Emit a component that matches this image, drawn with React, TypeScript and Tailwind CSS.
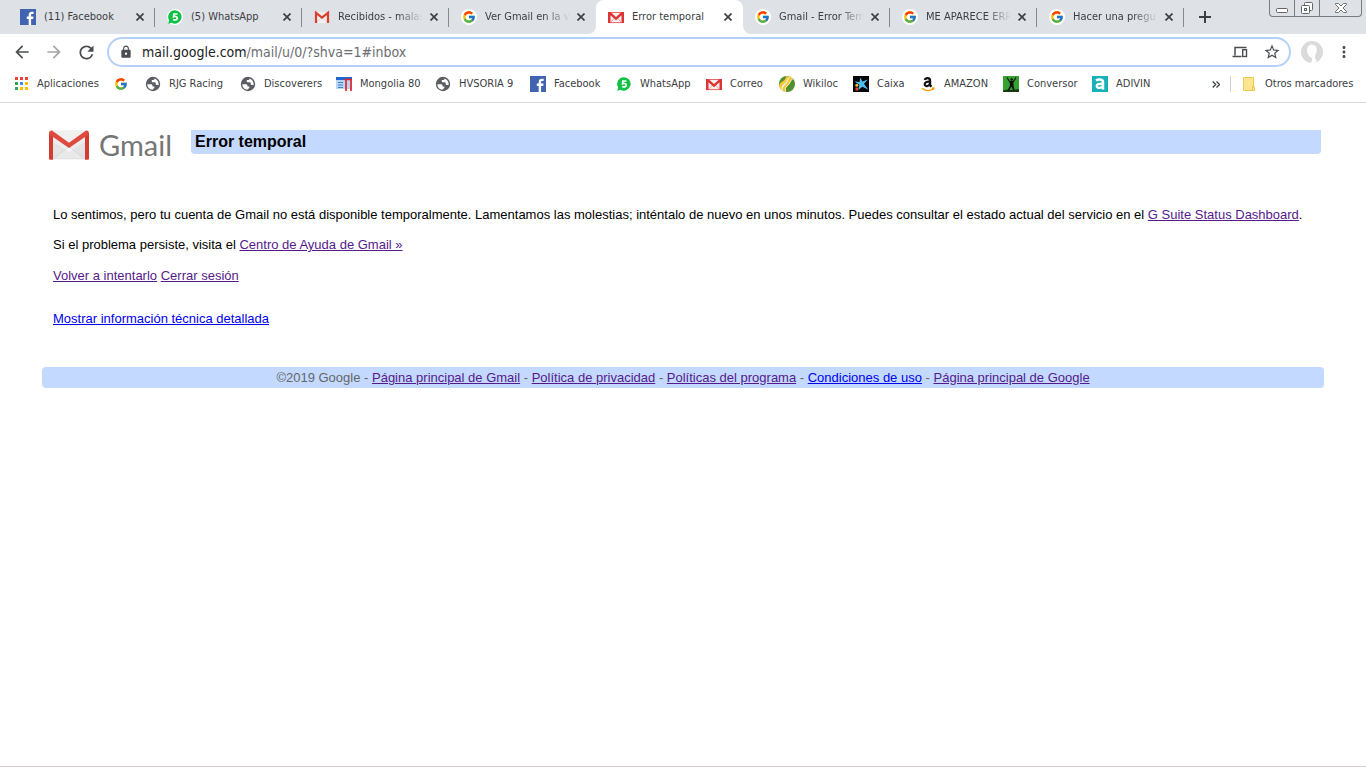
import type { ReactNode } from 'react';
import { MdArrowBack, MdArrowForward, MdRefresh, MdLock, MdStarBorder, MdMoreVert } from 'react-icons/md';
import { FcGoogle } from 'react-icons/fc';

const icon = 'block h-4 w-4 shrink-0';

function FacebookIcon() {
  return (
    <svg className={icon} viewBox="0 0 16 16">
      <rect width="16" height="16" fill="#4064b0" />
      <path d="M8.700 16V9.900H6.800V7.500h1.900V5.700C8.700 3.700 9.800 2.700 11.700 2.700l1.900.1V5h-1.300c-1 0-1.200.5-1.200 1.200v1.300h2.400l-.3 2.400h-2.100V16z" fill="#fff" />
    </svg>
  );
}

function WhatsAppIcon() {
  return (
    <svg className={icon} viewBox="0 0 16 16">
      <circle cx="8" cy="8" r="8" fill="#fff" />
      <path d="M8 1.200a6.700 6.700 0 1 1-3.300 12.600L1.200 14.700l1-3.300A6.700 6.700 0 0 1 8 1.200z" fill="#0cc143" />
      <path d="M10.500 5H6.800l-.2 2.700c.8-.5 3.700-.6 3.700 1.400 0 2-2.500 2.200-4.100 1.300" fill="none" stroke="#fff" strokeWidth="1.700" />
    </svg>
  );
}

function GmailIcon() {
  return (
    <svg className={icon} viewBox="0 0 16 16">
      <path d="M1 3h14v11H1z" fill="#f1efee" />
      <path d="M2 13.500l6-5 6 5" fill="none" stroke="#dcd8d6" />
      <path d="M2 14V3.800L8 8.500l6-4.700V14" fill="none" stroke="#d9402f" strokeWidth="2.200" />
    </svg>
  );
}

function GmailRedIcon() {
  return (
    <svg className={icon} viewBox="0 0 16 16">
      <path d="M0 3h16v11H0z" fill="#fbeeee" />
      <path d="M2 14l4.500-5M14 14L9.500 9" stroke="#eda3a3" strokeWidth=".9" />
      <path d="M0 3.500h16M0 13.600h16" stroke="#e05a5a" strokeWidth=".9" />
      <path d="M0 3h2.500L8 8l5.500-5H16v11h-2.500V6.300L8 11.200 2.500 6.300V14H0z" fill="#dd3535" />
    </svg>
  );
}

function GoogleIcon() {
  return (
    <span className="flex h-4 w-4 shrink-0 items-center justify-center rounded-full bg-white">
      <FcGoogle className="h-[14px] w-[14px]" />
    </span>
  );
}

function GlobeIcon() {
  return (
    <svg className={icon} viewBox="0 0 16 16">
      <circle cx="8" cy="8" r="7.200" fill="#5b5f64" />
      <path d="M2.300 8.200h3.400c1.300 0 1.800.6 1.800 1.500v.8h1.300c.8 0 .9.700.5 1.200l-1.500 1.900c-3.300.1-5.500-2.500-5.500-5.400z" fill="#fff" />
      <path d="M9.300 2.400c.3 1-.2 1.600-1.300 1.600H6.800v1.500c0 .5.300.8.800.8h2.200c.6 0 .9.400.9 1v.7c0 .6.400.9 1 .9h1.900C14 6 12.300 3.200 9.300 2.400z" fill="#fff" />
    </svg>
  );
}

function AppsIcon() {
  const colors = ['#ea4335', '#ea4335', '#ea4335', '#34a853', '#4285f4', '#fbbc05', '#34a853', '#fbbc05', '#fbbc05'];
  return (
    <svg className={icon} viewBox="0 0 16 16">
      {colors.map((c, i) => (
        <rect key={i} x={2 + (i % 3) * 5} y={1 + Math.floor(i / 3) * 5} width="3" height="3" fill={c} />
      ))}
    </svg>
  );
}

function MongoliaIcon() {
  return (
    <svg className={icon} viewBox="0 0 16 16">
      <path d="M0 1h16v12H0z" fill="#b9d5f3" />
      <path d="M0 1h16v3H0z" fill="#1f66cf" />
      <path d="M2 6.500h5M2 9h5M2 11.500h5" stroke="#3f7fd2" />
      <path d="M10 15V3.500h5V15M8.500 3.500H16" fill="none" stroke="#e12626" strokeWidth="1.700" />
    </svg>
  );
}

function WikilocIcon() {
  return (
    <svg className={icon} viewBox="0 0 16 16">
      <circle cx="8" cy="8" r="8" fill="#4f8f2c" />
      <path d="M3.500 14.500C1 10.500 5.500 8.500 7.200 6 8.500 4 8.500 2 11.500.9c1 .4 2 1.100 2.700 2C11.500 4.500 11.700 7 9.500 9c-2.300 2-3.500 3.500-2.200 7-1.500-.1-2.800-.7-3.800-1.500z" fill="#fff" />
      <path d="M3.900 14.800C2 11 6.300 9.200 8 6.500c1.200-2 1.200-4 3.700-5.500.9.400 1.500.8 2.100 1.500-2.700 1.700-2.700 4.200-4.700 6-2.300 2-3.700 3.700-2.600 7.300-1-.1-1.800-.5-2.600-1z" fill="#fbc52d" />
      <path d="M.2 9.500C.5 6.500 4.500 5.300 6 3.200 6.600 2.400 7 1.200 7.500 0 9 0 10 .2 11 .6 8.500 2.500 8.200 4.500 6.500 6.300 4.500 8.500 2 10 2.700 13.900 1.200 12.700.4 11.200.2 9.500z" fill="#fbc52d" />
      <path d="M2.700 13.900C2 10 4.500 8.500 6.500 6.300 8.200 4.500 8.500 2.500 11 .6" fill="none" stroke="#fff" strokeWidth=".7" />
    </svg>
  );
}

function CaixaIcon() {
  return (
    <svg className={icon} viewBox="0 0 16 16">
      <path d="M0 0h16v16H0z" fill="#050505" />
      <path d="M7.300 1.500l2 4 5.700-2-4 4.300 4.300 6-5.900-3L5.300 14l1-5.300L1.500 5.500l5 .5z" fill="#4fbdee" />
      <circle cx="3.800" cy="9.300" r="1.500" fill="#f5c51b" />
      <path d="M2.500 11.500h2.700v3H2.500z" fill="#e6442e" />
    </svg>
  );
}

function AmazonIcon() {
  return (
    <svg className={icon} viewBox="0 0 16 16">
      <path d="M4.900 4C5.500 1.500 10 1.300 10 4.500v4.500l1.400 1.700" fill="none" stroke="#111" strokeWidth="2.400" />
      <path d="M10 5.500C6 5.500 4.700 6.500 4.700 8.300c0 2.500 4.500 2.300 5.300-.4" fill="none" stroke="#111" strokeWidth="2.200" />
      <path d="M2 12.300c4 3 8.300 2.800 11.500.5M11.800 12.100l2-.1-.5 2" fill="none" stroke="#ff9900" strokeWidth="1.300" />
    </svg>
  );
}

function ConversorIcon() {
  return (
    <svg className={icon} viewBox="0 0 16 16">
      <path d="M0 0h16v16H0z" fill="#35a12f" />
      <path d="M0 14.500l4-1 4 .5 8-1v3H0z" fill="#173a14" />
      <circle cx="8.700" cy="3.500" r="1.200" fill="#111" />
      <path d="M4 1.500L6.500 5.500h4L13 1.500" fill="none" stroke="#111" strokeWidth="1.200" />
      <path d="M6.500 5.500h4v4l1 4.500h-1.500L8.500 10.500 6 14.500H4.500L7 9.500z" fill="#111" />
    </svg>
  );
}

function AdivinIcon() {
  return (
    <svg className={icon} viewBox="0 0 16 16">
      <path d="M0 0h16v16H0z" fill="#18b1b7" />
      <path d="M4 4.500c2-1.500 7-1.700 7 1.500v7.500" fill="none" stroke="#fff" strokeWidth="2.500" />
      <path d="M11 7.800C6.500 7.600 4.700 8.300 4.700 10c0 2.900 5.500 2.400 6.300-.5" fill="none" stroke="#fff" strokeWidth="2.300" />
    </svg>
  );
}

function FolderIcon() {
  return (
    <svg className={icon} viewBox="0 0 16 16">
      <path d="M2.500 1.500h10v10h1v3h-11z" fill="#ffe591" stroke="#edc84c" />
      <path d="M11.500 14.500v-4h2" fill="none" stroke="#edc84c" />
    </svg>
  );
}

function DevicesIcon() {
  return (
    <svg className={icon} viewBox="0 0 16 16">
      <path d="M3 11.500v-8h11.500M.5 12.500h9" fill="none" stroke="#4a4d51" strokeWidth="1.500" />
      <rect x="10.700" y="5.700" width="3.800" height="6.800" fill="none" stroke="#4a4d51" strokeWidth="1.400" />
    </svg>
  );
}

function GmailLogo() {
  return (
    <div className="flex h-8 w-[127px] shrink-0 items-center gap-[9px]" role="img" aria-label="Gmail">
      <svg className="block h-[30px] w-[42px] shrink-0" viewBox="0 0 42 30">
        <path d="M2 .5h38v29H2z" fill="#ededed" />
        <path d="M8 28L21 16l13 12z" fill="#f8f8f8" />
        <path d="M5 12l16 10L37 12v17H5z" fill="#d9d9d9" opacity=".5" />
        <path d="M5 28.500L21 17l16 11.500" fill="none" stroke="#d4d4d4" strokeWidth=".7" />
        <path d="M4 .5h34L21 13z" fill="#f0f0f0" />
        <path d="M1 3.500C1 .5 3.500 0 5 1.200l16 11.600L37 1.200c1.500-1.200 4-.7 4 2.300V28c0 1-.5 1.500-1.500 1.500H37V7L21 18 5 7v22.500H2.500C1.500 29.500 1 29 1 28z" fill="#de4a3f" />
        <path d="M1 3.500v1L5 7v22.500H2.500C1.500 29.500 1 29 1 28zM41 3.500v1L37 7v22.500h2.500c1 0 1.500-.5 1.500-1.500z" fill="#d23c32" />
      </svg>
      <span className="font-['Lato',sans-serif] text-[29px] leading-8 text-[#757575]">Gmail</span>
    </div>
  );
}

function CloseIcon() {
  return (
    <svg className="block h-2 w-2" viewBox="0 0 8 8">
      <path d="M.5.500l7 7M7.500.500l-7 7" stroke="#3c4043" strokeWidth="1.700" />
    </svg>
  );
}

type TabData = { title: string; icon: ReactNode; divider?: boolean; active?: boolean; fade?: boolean };

const tabs: TabData[] = [
  { title: '(11) Facebook', icon: <FacebookIcon />, divider: true },
  { title: '(5) WhatsApp', icon: <WhatsAppIcon />, divider: true },
  { title: 'Recibidos - malas', icon: <GmailIcon />, divider: true, fade: true },
  { title: 'Ver Gmail en la v', icon: <GoogleIcon />, fade: true },
  { title: 'Error temporal', icon: <GmailRedIcon />, active: true },
  { title: 'Gmail - Error Tem', icon: <GoogleIcon />, divider: true, fade: true },
  { title: 'ME APARECE ERR', icon: <GoogleIcon />, divider: true, fade: true },
  { title: 'Hacer una pregu', icon: <GoogleIcon />, divider: true, fade: true },
];

function Tab({ tab }: { tab: TabData }) {
  return (
    <div className={`relative flex h-[34px] w-[147px] min-w-0 items-center pl-3 ${tab.active ? 'rounded-t-lg bg-white' : ''}`}>
      {tab.active && (
        <>
          <svg className="absolute bottom-0 -left-2 h-2 w-2" viewBox="0 0 8 8"><path d="M8 0v8H0a8 8 0 0 0 8-8z" fill="#fff" /></svg>
          <svg className="absolute -right-2 bottom-0 h-2 w-2" viewBox="0 0 8 8"><path d="M0 0v8h8a8 8 0 0 1-8-8z" fill="#fff" /></svg>
        </>
      )}
      {tab.icon}
      <a
        href="#tab"
        className={`ml-2 w-[85px] shrink-0 overflow-hidden whitespace-nowrap ${tab.fade ? '[mask-image:linear-gradient(to_right,black_70%,transparent)]' : ''}`}
      >
        {tab.title}
      </a>
      <button aria-label="Cerrar pestaña" className="ml-[3px] flex h-4 w-4 shrink-0 items-center justify-center">
        <CloseIcon />
      </button>
      {tab.divider && <span className="absolute top-2 right-0 h-[19px] w-px bg-[#85888c]" />}
    </div>
  );
}

const bookmarks: { label: string; icon: ReactNode; width: string }[] = [
  { label: 'Aplicaciones', icon: <AppsIcon />, width: 'w-[100px]' },
  { label: '', icon: <GoogleIcon />, width: 'w-8' },
  { label: 'RJG Racing', icon: <GlobeIcon />, width: 'w-[95px]' },
  { label: 'Discoverers', icon: <GlobeIcon />, width: 'w-24' },
  { label: 'Mongolia 80', icon: <MongoliaIcon />, width: 'w-[99px]' },
  { label: 'HVSORIA 9', icon: <GlobeIcon />, width: 'w-[95px]' },
  { label: 'Facebook', icon: <FacebookIcon />, width: 'w-[86px]' },
  { label: 'WhatsApp', icon: <WhatsAppIcon />, width: 'w-[90px]' },
  { label: 'Correo', icon: <GmailRedIcon />, width: 'w-[73px]' },
  { label: 'Wikiloc', icon: <WikilocIcon />, width: 'w-[74px]' },
  { label: 'Caixa', icon: <CaixaIcon />, width: 'w-[67px]' },
  { label: 'AMAZON', icon: <AmazonIcon />, width: 'w-[83px]' },
  { label: 'Conversor', icon: <ConversorIcon />, width: 'w-[89px]' },
  { label: 'ADIVIN', icon: <AdivinIcon />, width: 'w-[64px]' },
];

function WindowControls() {
  return (
    <div className="mr-1 ml-auto flex h-[17px] shrink-0 self-start overflow-hidden rounded-b border border-t-0 border-[#777a7f]">
      <button aria-label="Minimizar" className="flex w-[25px] items-center justify-center border-r border-[#777a7f] pt-1">
        <svg className="h-[5px] w-3" viewBox="0 0 12 5"><rect x=".5" y=".5" width="11" height="4" rx="1" fill="#fff" stroke="#62656a" /></svg>
      </button>
      <button aria-label="Restaurar" className="flex w-[25px] items-center justify-center border-r border-[#777a7f]">
        <svg className="h-3 w-3" viewBox="0 0 12 12">
          <rect x="3.500" y=".5" width="8" height="8" rx="1" fill="#fff" stroke="#62656a" />
          <rect x=".5" y="3.500" width="8" height="8" rx="1" fill="#fff" stroke="#62656a" />
          <rect x="3.500" y="6.500" width="2" height="2" fill="none" stroke="#62656a" />
        </svg>
      </button>
      <button aria-label="Cerrar" className="flex w-[41px] items-center justify-center">
        <svg className="h-[10px] w-3" viewBox="0 0 12 10">
          <path d="M.5.500h3L6 3 8.500.500h3v1L8 5l3.500 3.500v1h-3L6 7 3.500 9.500h-3v-1L4 5 .5 1.500z" fill="#fff" stroke="#62656a" strokeWidth=".9" />
        </svg>
      </button>
    </div>
  );
}

const iconButton = 'flex h-8 w-8 shrink-0 items-center justify-center text-[#4a4d51]';
const visited = 'text-[#551a8b] underline';

export default function App() {
  return (
    <div className="flex min-h-screen flex-col bg-white pb-px font-['Liberation_Sans',Arial,sans-serif]">
      <header className="font-['DejaVu_Sans_Condensed','DejaVu_Sans',sans-serif] text-[11px] text-[#3c4043]">
        <nav className="flex h-[34px] items-center bg-[#dee1e6] pl-2" aria-label="Pestañas">
          {tabs.map((tab) => <Tab key={tab.title} tab={tab} />)}
          <button aria-label="Nueva pestaña" className="flex h-[34px] w-[42px] shrink-0 items-center justify-center">
            <svg className="h-3 w-3" viewBox="0 0 12 12"><path d="M6 0v12M0 6h12" stroke="#3c4043" strokeWidth="2" /></svg>
          </button>
          <WindowControls />
        </nav>
        <div className="flex h-9 items-center pl-[6px]">
          <button aria-label="Atrás" className={iconButton}><MdArrowBack size={20} /></button>
          <button aria-label="Adelante" className={`${iconButton} opacity-50`}><MdArrowForward size={20} /></button>
          <button aria-label="Recargar" className={iconButton}><MdRefresh size={21} /></button>
          <div className="ml-[5px] flex h-[30px] min-w-0 grow items-center rounded-full border-2 border-[#b3d0f8] pr-px pl-[10px]">
            <MdLock className="shrink-0 text-[#4a4d51]" size={14} />
            <a href="#inbox" aria-label="Dirección" className="ml-[9px] grow text-[14px] text-[#6a6d71]">
              <span className="text-[#202124]">mail.google.com</span>/mail/u/0/?shva=1#inbox
            </a>
            <button aria-label="Enviar a tus dispositivos" className={iconButton}><DevicesIcon /></button>
            <button aria-label="Añadir a marcadores" className={iconButton}><MdStarBorder size={18} /></button>
          </div>
          <button aria-label="Perfil" className="ml-[5px] flex h-8 w-8 shrink-0 items-center justify-center">
            <svg className="h-[22px] w-[22px]" viewBox="0 0 22 22">
              <circle cx="11" cy="11" r="11" fill="#dadada" />
              <path d="M11 3.500c3.500 0 5 2.500 4.700 6-.2 2.500-1 4-1.700 5v3l1.500 1.500v2.200a11 11 0 0 1-6 .500l1.500-1.700v-3C8 16 6 12.500 6 9c0-3 2-5.500 5-5.500z" fill="#fff" />
            </svg>
          </button>
          <button aria-label="Menú" className={`${iconButton} mr-[6px]`}><MdMoreVert size={18} /></button>
        </div>
        <div className="flex h-[33px] items-center border-b border-[#d9dadc] pb-1 pl-[13px]">
          {bookmarks.map((b, i) => (
            <a key={i} href="#marcador" aria-label={b.label || 'Google'} className={`flex shrink-0 items-center gap-2 whitespace-nowrap ${b.width}`}>
              {b.icon}
              {b.label}
            </a>
          ))}
          <button aria-label="Más marcadores" className="ml-auto flex h-6 w-6 items-center justify-center">
            <svg className="h-[7px] w-2" viewBox="0 0 8 7"><path d="M.7.500l3 3-3 3M4.500.500l3 3-3 3" fill="none" stroke="#3c4043" strokeWidth="1.300" /></svg>
          </button>
          <span className="ml-[2px] h-4 w-px bg-[#ccced1]" />
          <a href="#otros" className="ml-[10px] flex w-[125px] shrink-0 items-center gap-2 whitespace-nowrap"><FolderIcon />Otros marcadores</a>
        </div>
      </header>

      <main className="grow border-b border-[#d4ccc8] px-[42px] pt-[26px] text-[13px] leading-[15px] text-black">
        <div className="flex items-start pr-[3px] pl-[6px]">
          <GmailLogo />
          <h1 className="mt-px ml-4 h-6 grow rounded-b bg-[#c3d9ff] pl-1 text-[16px] leading-6 font-bold">Error temporal</h1>
        </div>
        <section className="px-[11px] pt-[46px]">
          <p>
            Lo sentimos, pero tu cuenta de Gmail no está disponible temporalmente. Lamentamos las molestias; inténtalo de nuevo en unos minutos. Puedes consultar el estado actual del servicio en el{' '}
            <a href="#status" className={visited}>G Suite Status Dashboard</a>.
          </p>
          <p className="mt-[15px]">Si el problema persiste, visita el <a href="#ayuda" className={visited}>Centro de Ayuda de Gmail »</a></p>
          <p className="mt-4"><a href="#reintentar" className={visited}>Volver a intentarlo</a> <a href="#salir" className={visited}>Cerrar sesión</a></p>
          <p className="mt-7"><a href="#detalles" className="text-[#0000ee] underline">Mostrar información técnica detallada</a></p>
        </section>
        <footer className="mt-[41px] rounded bg-[#c3d9ff] py-[3px] text-center text-[#666666]">
          ©2019 Google - <a href="#gmail" className={visited}>Página principal de Gmail</a> - <a href="#privacidad" className={visited}>Política de privacidad</a> - <a href="#politicas" className={visited}>Políticas del programa</a> - <a href="#condiciones" className="text-[#0000ee] underline">Condiciones de uso</a> - <a href="#google" className={visited}>Página principal de Google</a>
        </footer>
      </main>
    </div>
  );
}
